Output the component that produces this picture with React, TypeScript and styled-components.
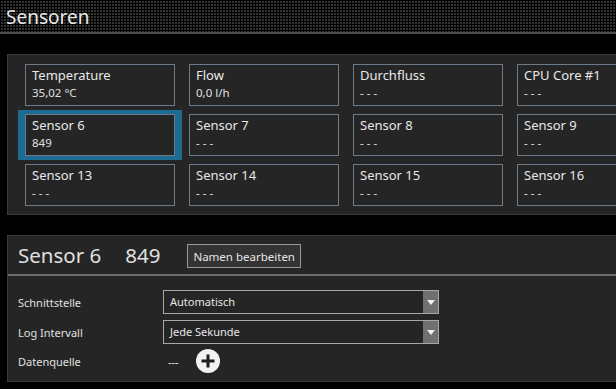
import styled, { createGlobalStyle } from "styled-components";

const GlobalStyle = createGlobalStyle`
  html, body {
    margin: 0;
    padding: 0;
    background: #000;
    overflow: hidden;
  }
  body {
    font-family: "Noto Sans", "Open Sans", sans-serif;
    color: #e6e6e6;
  }
`;

const Page = styled.div`
  width: 616px;
  height: 389px;
  overflow: hidden;
  background: #000;
`;

const TitleBar = styled.div`
  height: 32px;
  border-bottom: 2px solid #4d4d4d;
  background-color: #333;
  background-image: linear-gradient(90deg, #000 1px, transparent 1px),
    linear-gradient(#000 1px, transparent 1px);
  background-size: 3px 3px;
  display: flex;
  align-items: center;
  padding-left: 6px;
`;

const Title = styled.h1`
  margin: 0;
  font-size: 19px;
  font-weight: 400;
  color: #e8e8e8;
  padding-top: 2px;
`;

const Panel = styled.section`
  margin-left: 7px;
  width: 640px;
  background: #252525;
  border: 1px solid #3a3a3a;
`;

const SensorPanel = styled(Panel)`
  margin-top: 20px;
  padding: 5px 0 4px 10px;
`;

const Grid = styled.div`
  display: grid;
  grid-template-columns: repeat(4, 164px);
  grid-auto-rows: 50px;
`;

const Cell = styled.div<{ $selected?: boolean }>`
  padding: 4px 7px;
  background: ${(p) => (p.$selected ? "#1c6b92" : "transparent")};
`;

const Tile = styled.div`
  height: 42px;
  box-sizing: border-box;
  border: 1px solid #6d7a88;
  background: #252525;
  padding: 1px 0 0 6px;
  display: flex;
  flex-direction: column;
`;

const TileName = styled.span`
  font-size: 13px;
  line-height: 19px;
  color: #e8e8e8;
  white-space: nowrap;
`;

const TileValue = styled.span`
  font-size: 11.5px;
  line-height: 16px;
  color: #e0e0e0;
  white-space: nowrap;
`;

const DetailPanel = styled(Panel)`
  margin-top: 20px;
  height: 145px;
`;

const DetailHeader = styled.div`
  height: 38px;
  border-bottom: 2px solid #6a6a6a;
  display: flex;
  align-items: center;
  padding-left: 10px;
`;

const BigText = styled.span<{ $gap: number }>`
  font-size: 20.5px;
  color: #e0e0e0;
  margin-right: ${(p) => p.$gap}px;
`;

const EditButton = styled.button`
  font-family: inherit;
  font-size: 11.5px;
  color: #e6e6e6;
  background: #333;
  border: 1px solid #9a9a9a;
  height: 24px;
  padding: 0 5px;
  margin-top: 2px;
`;

const Form = styled.div`
  display: grid;
  grid-template-columns: 145px 276px;
  grid-template-rows: 30px 30px 28px;
  padding: 11px 0 0 10px;
  align-items: center;
`;

const Label = styled.span`
  font-size: 11px;
  color: #e0e0e0;
`;

const Combo = styled.div`
  height: 24px;
  box-sizing: border-box;
  border: 1px solid #a8a8a8;
  display: flex;
  align-items: stretch;
  background: #252525;
`;

const ComboText = styled.span`
  flex: 1;
  font-size: 11px;
  line-height: 22px;
  padding-left: 6px;
  color: #e6e6e6;
`;

const ComboButton = styled.span`
  width: 15px;
  background: #707070;
  display: flex;
  align-items: center;
  justify-content: center;
  &::after {
    content: "";
    border-left: 4px solid transparent;
    border-right: 4px solid transparent;
    border-top: 5px solid #f0f0f0;
  }
`;

const SourceRow = styled.div`
  display: flex;
  align-items: center;
  gap: 17px;
  padding-left: 5px;
  font-size: 11px;
`;

const PlusIcon = () => (
  <svg width="24" height="24" viewBox="0 0 24 24">
    <circle cx="12" cy="12" r="12" fill="#f2f2f2" />
    <path d="M12 5.5v13M5.5 12h13" stroke="#202020" strokeWidth="3" />
  </svg>
);

const sensors = [
  { name: "Temperature", value: "35,02 °C" },
  { name: "Flow", value: "0,0 l/h" },
  { name: "Durchfluss", value: "- - -" },
  { name: "CPU Core #1", value: "- - -" },
  { name: "Sensor 6", value: "849", selected: true },
  { name: "Sensor 7", value: "- - -" },
  { name: "Sensor 8", value: "- - -" },
  { name: "Sensor 9", value: "- - -" },
  { name: "Sensor 13", value: "- - -" },
  { name: "Sensor 14", value: "- - -" },
  { name: "Sensor 15", value: "- - -" },
  { name: "Sensor 16", value: "- - -" },
];

export default function App() {
  return (
    <Page>
      <GlobalStyle />
      <TitleBar>
        <Title>Sensoren</Title>
      </TitleBar>
      <SensorPanel>
        <Grid>
          {sensors.map((s) => (
            <Cell key={s.name} $selected={s.selected}>
              <Tile>
                <TileName>{s.name}</TileName>
                <TileValue>{s.value}</TileValue>
              </Tile>
            </Cell>
          ))}
        </Grid>
      </SensorPanel>
      <DetailPanel>
        <DetailHeader>
          <BigText $gap={24}>Sensor 6</BigText>
          <BigText $gap={27}>849</BigText>
          <EditButton>Namen bearbeiten</EditButton>
        </DetailHeader>
        <Form>
          <Label>Schnittstelle</Label>
          <Combo>
            <ComboText>Automatisch</ComboText>
            <ComboButton />
          </Combo>
          <Label>Log Intervall</Label>
          <Combo>
            <ComboText>Jede Sekunde</ComboText>
            <ComboButton />
          </Combo>
          <Label>Datenquelle</Label>
          <SourceRow>
            <span>---</span>
            <PlusIcon />
          </SourceRow>
        </Form>
      </DetailPanel>
    </Page>
  );
}
